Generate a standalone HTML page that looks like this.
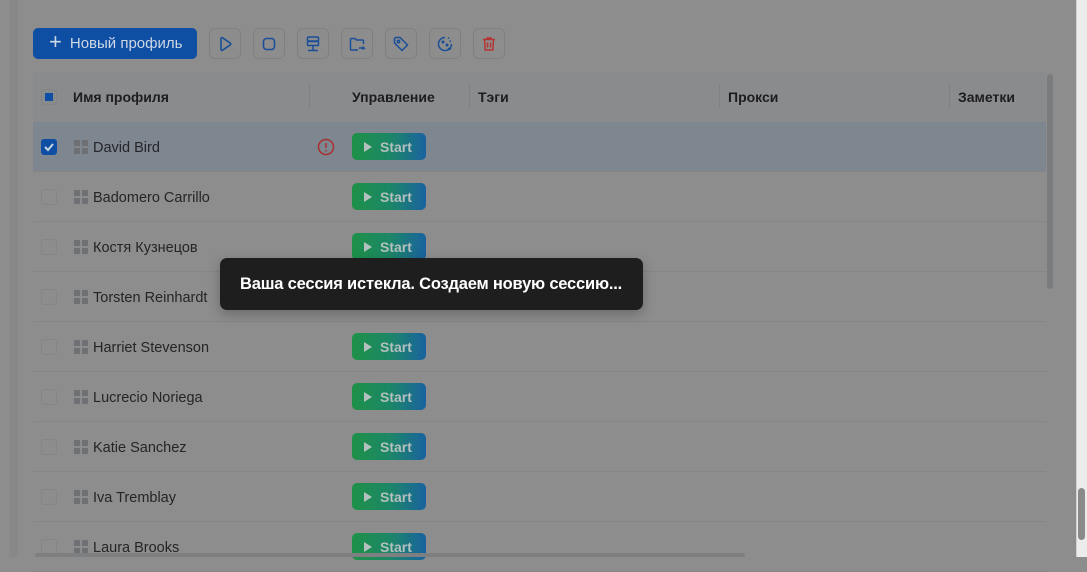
<!DOCTYPE html>
<html><head><meta charset="utf-8"><style>
*{margin:0;padding:0;box-sizing:border-box}
body{width:1087px;height:557px;overflow:hidden;background:#8d8d8d;font-family:"Liberation Sans",sans-serif;position:relative;color:#1e1e1e}
.strip{position:absolute;left:10px;top:0;width:8px;height:557px;background:#888889}
.pscroll{position:absolute;left:1076px;top:0;width:11px;height:557px;background:#ececec;border-left:1px solid #d0d0d0}
.pthumb{position:absolute;left:1078px;top:488px;width:7px;height:52px;background:#8a8a8a;border-radius:4px}
.newbtn{position:absolute;left:33px;top:28px;width:164px;height:31px;background:#0e4fa3;border-radius:5px;color:#cfd8e6;font-size:15px;display:flex;align-items:center;padding-left:16px}
.newbtn b{font-weight:300;font-size:22px;margin-right:8px;margin-top:-3px}
.ib{position:absolute;top:28px;width:32px;height:31px;border:1px solid #7f8082;border-radius:6px;display:flex;align-items:center;justify-content:center}
.head{position:absolute;left:33px;top:72px;width:1013px;height:50px;background:#8a8b8d}
.h{position:absolute;top:89px;font-size:14px;font-weight:bold;color:#1d1d1f}
.sep{position:absolute;top:84px;width:1px;height:24px;background:#808183}
.row{position:absolute;left:33px;width:1013px;height:50px;border-bottom:1px solid #858585}
.sel{background:#7e8690}
.cb{position:absolute;left:8px;top:17px;width:16px;height:16px;border:1px solid #848585;border-radius:3px}
.gi{position:absolute;left:41px;top:18px;width:14px;height:14px}
.gi i{position:absolute;width:6px;height:6px;background:#6f7073}
.nm{position:absolute;left:60px;top:18px;font-size:14.5px;color:#252527}
.st{position:absolute;left:319px;top:11px;width:74px;height:27px;border-radius:5px;background:linear-gradient(90deg,#1e9148,#1c8766 50%,#1a62a0);color:#b3c0be;font-weight:bold;font-size:14px;display:flex;align-items:center;padding-left:12px}
.st:before{content:"";width:0;height:0;border-left:8px solid #b3c0be;border-top:5px solid transparent;border-bottom:5px solid transparent;margin-right:8px}
.toast{position:absolute;left:220px;top:258px;width:423px;height:52px;background:#1e1e1e;border-radius:7px;color:#fff;font-weight:bold;font-size:16.5px;letter-spacing:-0.2px;display:flex;align-items:center;padding-left:20px;box-shadow:0 4px 12px rgba(0,0,0,.25)}
.iscroll{position:absolute;left:1047px;top:74px;width:6px;height:215px;background:#7b7c7e;border-radius:3px}
.hscroll{position:absolute;left:35px;top:553px;width:710px;height:4px;background:#7e7f81;border-radius:2px}
</style></head><body>
<div class="strip"></div>
<div class="newbtn"><b>+</b>Новый профиль</div>
<div class="ib" style="left:209px"><svg width="18" height="18" viewBox="0 0 18 18" fill="none" stroke="#1a4f97" stroke-width="1.6"><path d="M5 3.5v11c0 .8.8 1.2 1.4.8l8-5.5c.5-.4.5-1.2 0-1.6l-8-5.5C5.8 2.3 5 2.7 5 3.5z"/></svg></div>
<div class="ib" style="left:253px"><svg width="18" height="18" viewBox="0 0 18 18" fill="none" stroke="#1a4f97" stroke-width="1.6"><rect x="3.5" y="3.5" width="11" height="11" rx="3"/></svg></div>
<div class="ib" style="left:297px"><svg width="18" height="18" viewBox="0 0 18 18" fill="none" stroke="#1a4f97" stroke-width="1.5"><rect x="3.5" y="2" width="11" height="4" rx="1"/><rect x="3.5" y="6.5" width="11" height="4" rx="1"/><path d="M9 10.5v3M4 15.5h10M9 13.5v2"/></svg></div>
<div class="ib" style="left:341px"><svg width="18" height="18" viewBox="0 0 18 18" fill="none" stroke="#1a4f97" stroke-width="1.5"><path d="M2.5 14V4.5c0-.6.4-1 1-1h3.5l1.5 1.5h6c.6 0 1 .4 1 1V9M2.5 14c0 .6.4 1 1 1H10M11 13h5l-1.5-1.5M16 13l-1.5 1.5"/></svg></div>
<div class="ib" style="left:385px"><svg width="18" height="18" viewBox="0 0 18 18" fill="none" stroke="#1a4f97" stroke-width="1.5"><path d="M2.5 3.5v4.5l7.5 7.5 5.5-5.5L8 2.5H3.5z"/><circle cx="6.5" cy="6.5" r="1.2"/></svg></div>
<div class="ib" style="left:429px"><svg width="18" height="18" viewBox="0 0 18 18" fill="none" stroke="#1a4f97" stroke-width="1.5"><path d="M9 2.5a6.5 6.5 0 1 0 6.5 6.5M12 2.5l1 1M15 6l-1.5 .5"/><circle cx="7" cy="7" r=".8"/><circle cx="11" cy="10" r=".8"/><path d="M12 13l1.5 1.5L15 13"/></svg></div>
<div class="ib" style="left:473px"><svg width="18" height="18" viewBox="0 0 18 18" fill="none" stroke="#b43434" stroke-width="1.5"><path d="M3 4.5h12M7 4.5V3h4v1.5M4.5 4.5l.7 10.5h7.6l.7-10.5M7.5 7.5v5M10.5 7.5v5"/></svg></div>

<div class="head"><div class="cb" style="top:17px"><div style="position:absolute;left:3px;top:3px;width:8px;height:8px;background:#0e4fa3"></div></div></div>
<div class="h" style="left:73px">Имя профиля</div>
<div class="sep" style="left:309px"></div>
<div class="h" style="left:352px">Управление</div>
<div class="sep" style="left:469px"></div>
<div class="h" style="left:478px">Тэги</div>
<div class="sep" style="left:719px"></div>
<div class="h" style="left:728px">Прокси</div>
<div class="sep" style="left:949px"></div>
<div class="h" style="left:958px">Заметки</div>

<div class="row sel" style="top:122px"><div class="cb" style="background:#0e4fa3;border-color:#0e4fa3"><svg width="14" height="14" viewBox="0 0 14 14" fill="none" stroke="#c9d4e2" stroke-width="2"><path d="M3 7l3 3 5-6"/></svg></div><div class="gi"><i style="left:0;top:0"></i><i style="left:8px;top:0"></i><i style="left:0;top:8px"></i><i style="left:8px;top:8px"></i></div><div class="nm">David Bird</div><svg style="position:absolute;left:284px;top:16px" width="18" height="18" viewBox="0 0 18 18" fill="none" stroke="#a93030" stroke-width="1.5"><circle cx="9" cy="9" r="7.5"/><path d="M9 5v5M9 12v1.5"/></svg><div class="st">Start</div></div>
<div class="row" style="top:172px"><div class="cb"></div><div class="gi"><i style="left:0;top:0"></i><i style="left:8px;top:0"></i><i style="left:0;top:8px"></i><i style="left:8px;top:8px"></i></div><div class="nm">Badomero Carrillo</div><div class="st">Start</div></div>
<div class="row" style="top:222px"><div class="cb"></div><div class="gi"><i style="left:0;top:0"></i><i style="left:8px;top:0"></i><i style="left:0;top:8px"></i><i style="left:8px;top:8px"></i></div><div class="nm">Костя Кузнецов</div><div class="st">Start</div></div>
<div class="row" style="top:272px"><div class="cb"></div><div class="gi"><i style="left:0;top:0"></i><i style="left:8px;top:0"></i><i style="left:0;top:8px"></i><i style="left:8px;top:8px"></i></div><div class="nm">Torsten Reinhardt</div><div class="st">Start</div></div>
<div class="row" style="top:322px"><div class="cb"></div><div class="gi"><i style="left:0;top:0"></i><i style="left:8px;top:0"></i><i style="left:0;top:8px"></i><i style="left:8px;top:8px"></i></div><div class="nm">Harriet Stevenson</div><div class="st">Start</div></div>
<div class="row" style="top:372px"><div class="cb"></div><div class="gi"><i style="left:0;top:0"></i><i style="left:8px;top:0"></i><i style="left:0;top:8px"></i><i style="left:8px;top:8px"></i></div><div class="nm">Lucrecio Noriega</div><div class="st">Start</div></div>
<div class="row" style="top:422px"><div class="cb"></div><div class="gi"><i style="left:0;top:0"></i><i style="left:8px;top:0"></i><i style="left:0;top:8px"></i><i style="left:8px;top:8px"></i></div><div class="nm">Katie Sanchez</div><div class="st">Start</div></div>
<div class="row" style="top:472px"><div class="cb"></div><div class="gi"><i style="left:0;top:0"></i><i style="left:8px;top:0"></i><i style="left:0;top:8px"></i><i style="left:8px;top:8px"></i></div><div class="nm">Iva Tremblay</div><div class="st">Start</div></div>
<div class="row" style="top:522px"><div class="cb"></div><div class="gi"><i style="left:0;top:0"></i><i style="left:8px;top:0"></i><i style="left:0;top:8px"></i><i style="left:8px;top:8px"></i></div><div class="nm">Laura Brooks</div><div class="st">Start</div></div>

<div class="iscroll"></div>
<div class="hscroll"></div>
<div class="toast">Ваша сессия истекла. Создаем новую сессию...</div>
<div class="pscroll"></div>
<div class="pthumb"></div>
</body></html>
